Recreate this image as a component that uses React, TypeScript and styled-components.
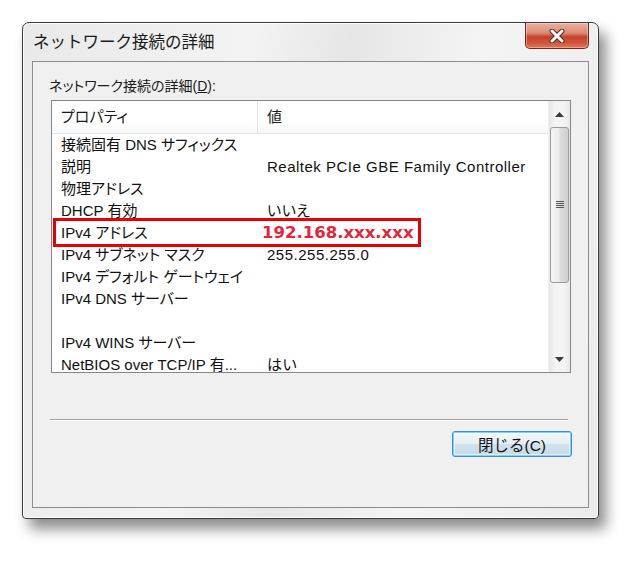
import * as React from 'react'
import styled, { createGlobalStyle } from 'styled-components'

const GlobalStyle = createGlobalStyle`
body {
  margin: 0;
  background: #ffffff;
  font-family: "Liberation Sans", "Noto Sans CJK JP", sans-serif;
  color: #111;
}
`

const Page = styled.div`
  width: 642px;
  height: 562px;
  box-sizing: border-box;
  padding: 22px 0 0 22px;
`

const Window = styled.div`
  width: 577px;
  height: 497px;
  box-sizing: border-box;
  border: 1px solid #3b3b3b;
  border-radius: 7px 7px 4px 4px;
  background: linear-gradient(100deg, #e9e9e9 0%, #f3f3f3 35%, #e6e6e6 50%, #f4f4f4 70%, #ebebeb 100%);
  box-shadow: 7px 10px 14px rgba(0, 0, 0, 0.45), inset 0 0 0 1px rgba(255, 255, 255, 0.85);
  display: flex;
  flex-direction: column;
`

const TitleBar = styled.div`
  height: 38px;
  flex: none;
  display: flex;
  justify-content: space-between;
  align-items: flex-start;
  padding: 0 9px 0 10px;
`

const TitleText = styled.div`
  line-height: 38px;
  font-size: 16.5px;
  color: #1a1a1a;
`

const CloseButton = styled.div`
  width: 64px;
  height: 26px;
  box-sizing: border-box;
  border: 1px solid #6d2b20;
  border-top: none;
  border-radius: 0 0 5px 5px;
  background: linear-gradient(180deg, #eab0a1 0%, #dc8a74 40%, #c5432b 55%, #d0553b 80%, #e07a5a 100%);
  box-shadow: inset 0 0 0 1px rgba(255, 255, 255, 0.35);
  display: flex;
  align-items: center;
  justify-content: center;
`

const Client = styled.div`
  flex: 1;
  margin: 0 9px 10px 9px;
  border: 1px solid #8d8d8d;
  background: #f0f0f0;
  padding: 0 17px 0 16px;
  display: flex;
  flex-direction: column;
`

const GroupLabel = styled.div`
  margin-top: 14px;
  height: 24px;
  line-height: 20px;
  font-size: 14px;
  color: #1a1a1a;
  font-feature-settings: "palt";
  u {
    text-decoration: underline;
  }
`

const ListBox = styled.div`
  margin-left: 2px;
  height: 273px;
  box-sizing: border-box;
  border: 1px solid #828790;
  background: #ffffff;
  display: flex;
  overflow: hidden;
`

const ListBody = styled.div`
  flex: 1;
  display: flex;
  flex-direction: column;
  overflow: hidden;
  font-feature-settings: "palt";
`

const Header = styled.div`
  height: 33px;
  flex: none;
  display: grid;
  grid-template-columns: 206px 1fr;
  border-bottom: 1px solid #e5e5e5;
  box-sizing: border-box;
  background: linear-gradient(180deg, #ffffff 0%, #ffffff 60%, #f7f8f9 100%);
`

const HeaderCell = styled.div<{ $divider?: boolean }>`
  padding-left: 9px;
  line-height: 31px;
  font-size: 15px;
  color: #1a1a1a;
  border-right: ${(p) => (p.$divider ? '1px solid #e3e3e3' : 'none')};
`

const Row = styled.div`
  position: relative;
  height: 22px;
  flex: none;
  display: grid;
  grid-template-columns: 206px 1fr;
  font-size: 15px;
  line-height: 22px;
`

const Cell = styled.div<{ $wide?: boolean }>`
  padding-left: 9px;
  white-space: nowrap;
  overflow: hidden;
  letter-spacing: ${(p) => (p.$wide ? '0.5px' : '0')};
`

const Address = styled.span`
  margin-left: -5px;
  font-family: "DejaVu Sans", sans-serif;
  font-weight: bold;
  font-size: 16.5px;
  letter-spacing: 0;
  color: #e6243a;
`

const Mark = styled.div`
  position: absolute;
  left: 1px;
  top: -4px;
  width: 368px;
  height: 29px;
  box-sizing: border-box;
  border: 3px solid #e60000;
  pointer-events: none;
`

const ScrollBar = styled.div`
  width: 21px;
  flex: none;
  background: linear-gradient(90deg, #e6e6e6 0%, #f4f4f4 30%, #f4f4f4 70%, #e9e9e9 100%);
  border-left: 1px solid #f0f0f0;
  display: flex;
  flex-direction: column;
`

const ArrowBox = styled.div`
  height: 26px;
  display: flex;
  align-items: center;
  justify-content: center;
`

const Thumb = styled.div`
  margin: 0 1px;
  height: 156px;
  box-sizing: border-box;
  border: 1px solid #9a9a9a;
  border-radius: 3px;
  background: linear-gradient(90deg, #f6f6f6 0%, #ececec 45%, #dcdcdc 55%, #cfcfcf 100%);
  display: flex;
  align-items: center;
  justify-content: center;
`

const Track = styled.div`
  flex: 1;
`

const Separator = styled.div`
  margin: 46px 3px 0 1px;
  height: 1px;
  background: #a0a0a0;
  border-bottom: 1px solid #ffffff;
`

const Footer = styled.div`
  display: flex;
  justify-content: flex-end;
  margin-top: 10px;
  margin-right: -1px;
`

const DefaultButton = styled.div`
  width: 120px;
  height: 26px;
  box-sizing: border-box;
  border: 1px solid #3c8fcf;
  border-radius: 3px;
  background: linear-gradient(180deg, #f3f8fb 0%, #e6eff5 48%, #d2e2ec 52%, #c5d9e7 100%);
  box-shadow: inset 0 0 0 1px #7fd0f5, inset 0 0 0 2px rgba(255, 255, 255, 0.6);
  display: flex;
  align-items: center;
  justify-content: center;
  font-size: 15.5px;
  color: #111;
`

interface IRow {
  name: string,
  value?: string,
  marked?: boolean
}

const rows: IRow[] = [
  { name: '接続固有 DNS サフィックス' },
  { name: '説明', value: 'Realtek PCIe GBE Family Controller' },
  { name: '物理アドレス' },
  { name: 'DHCP 有効', value: 'いいえ' },
  { name: 'IPv4 アドレス', marked: true },
  { name: 'IPv4 サブネット マスク', value: '255.255.255.0' },
  { name: 'IPv4 デフォルト ゲートウェイ' },
  { name: 'IPv4 DNS サーバー' },
  { name: '' },
  { name: 'IPv4 WINS サーバー' },
  { name: 'NetBIOS over TCP/IP 有...', value: 'はい' },
]

const CloseGlyph = () => (
  <svg width="18" height="14" viewBox="0 0 18 14">
    <path d="M4 2 L14 12 M14 2 L4 12" stroke="#5a2a22" strokeWidth="5" strokeLinecap="round" />
    <path d="M4 2 L14 12 M14 2 L4 12" stroke="#ffffff" strokeWidth="3" strokeLinecap="round" />
  </svg>
)

const Arrow = ({ down }: { down?: boolean }) => (
  <svg width="9" height="5" viewBox="0 0 9 5">
    <path d={down ? 'M0 0 L9 0 L4.5 5 Z' : 'M0 5 L9 5 L4.5 0 Z'} fill="#3a3a3a" />
  </svg>
)

const Grip = () => (
  <svg width="8" height="8" viewBox="0 0 8 8">
    <path d="M0 0.5 H8 M0 2.5 H8 M0 4.5 H8 M0 6.5 H8" stroke="#555" strokeWidth="1" />
  </svg>
)

export default class App extends React.Component {
  public render() {
    return (
      <Page>
        <GlobalStyle />
        <Window>
          <TitleBar>
            <TitleText>ネットワーク接続の詳細</TitleText>
            <CloseButton>
              <CloseGlyph />
            </CloseButton>
          </TitleBar>
          <Client>
            <GroupLabel>
              ネットワーク接続の詳細(<u>D</u>):
            </GroupLabel>
            <ListBox>
              <ListBody>
                <Header>
                  <HeaderCell $divider>プロパティ</HeaderCell>
                  <HeaderCell>値</HeaderCell>
                </Header>
                {rows.map((r, i) => (
                  <Row key={i}>
                    <Cell>{r.name}</Cell>
                    <Cell $wide>
                      {r.marked ? <Address>192.168.xxx.xxx</Address> : r.value}
                    </Cell>
                    {r.marked && <Mark />}
                  </Row>
                ))}
              </ListBody>
              <ScrollBar>
                <ArrowBox>
                  <Arrow />
                </ArrowBox>
                <Thumb>
                  <Grip />
                </Thumb>
                <Track />
                <ArrowBox>
                  <Arrow down />
                </ArrowBox>
              </ScrollBar>
            </ListBox>
            <Separator />
            <Footer>
              <DefaultButton>閉じる(C)</DefaultButton>
            </Footer>
          </Client>
        </Window>
      </Page>
    )
  }
}
